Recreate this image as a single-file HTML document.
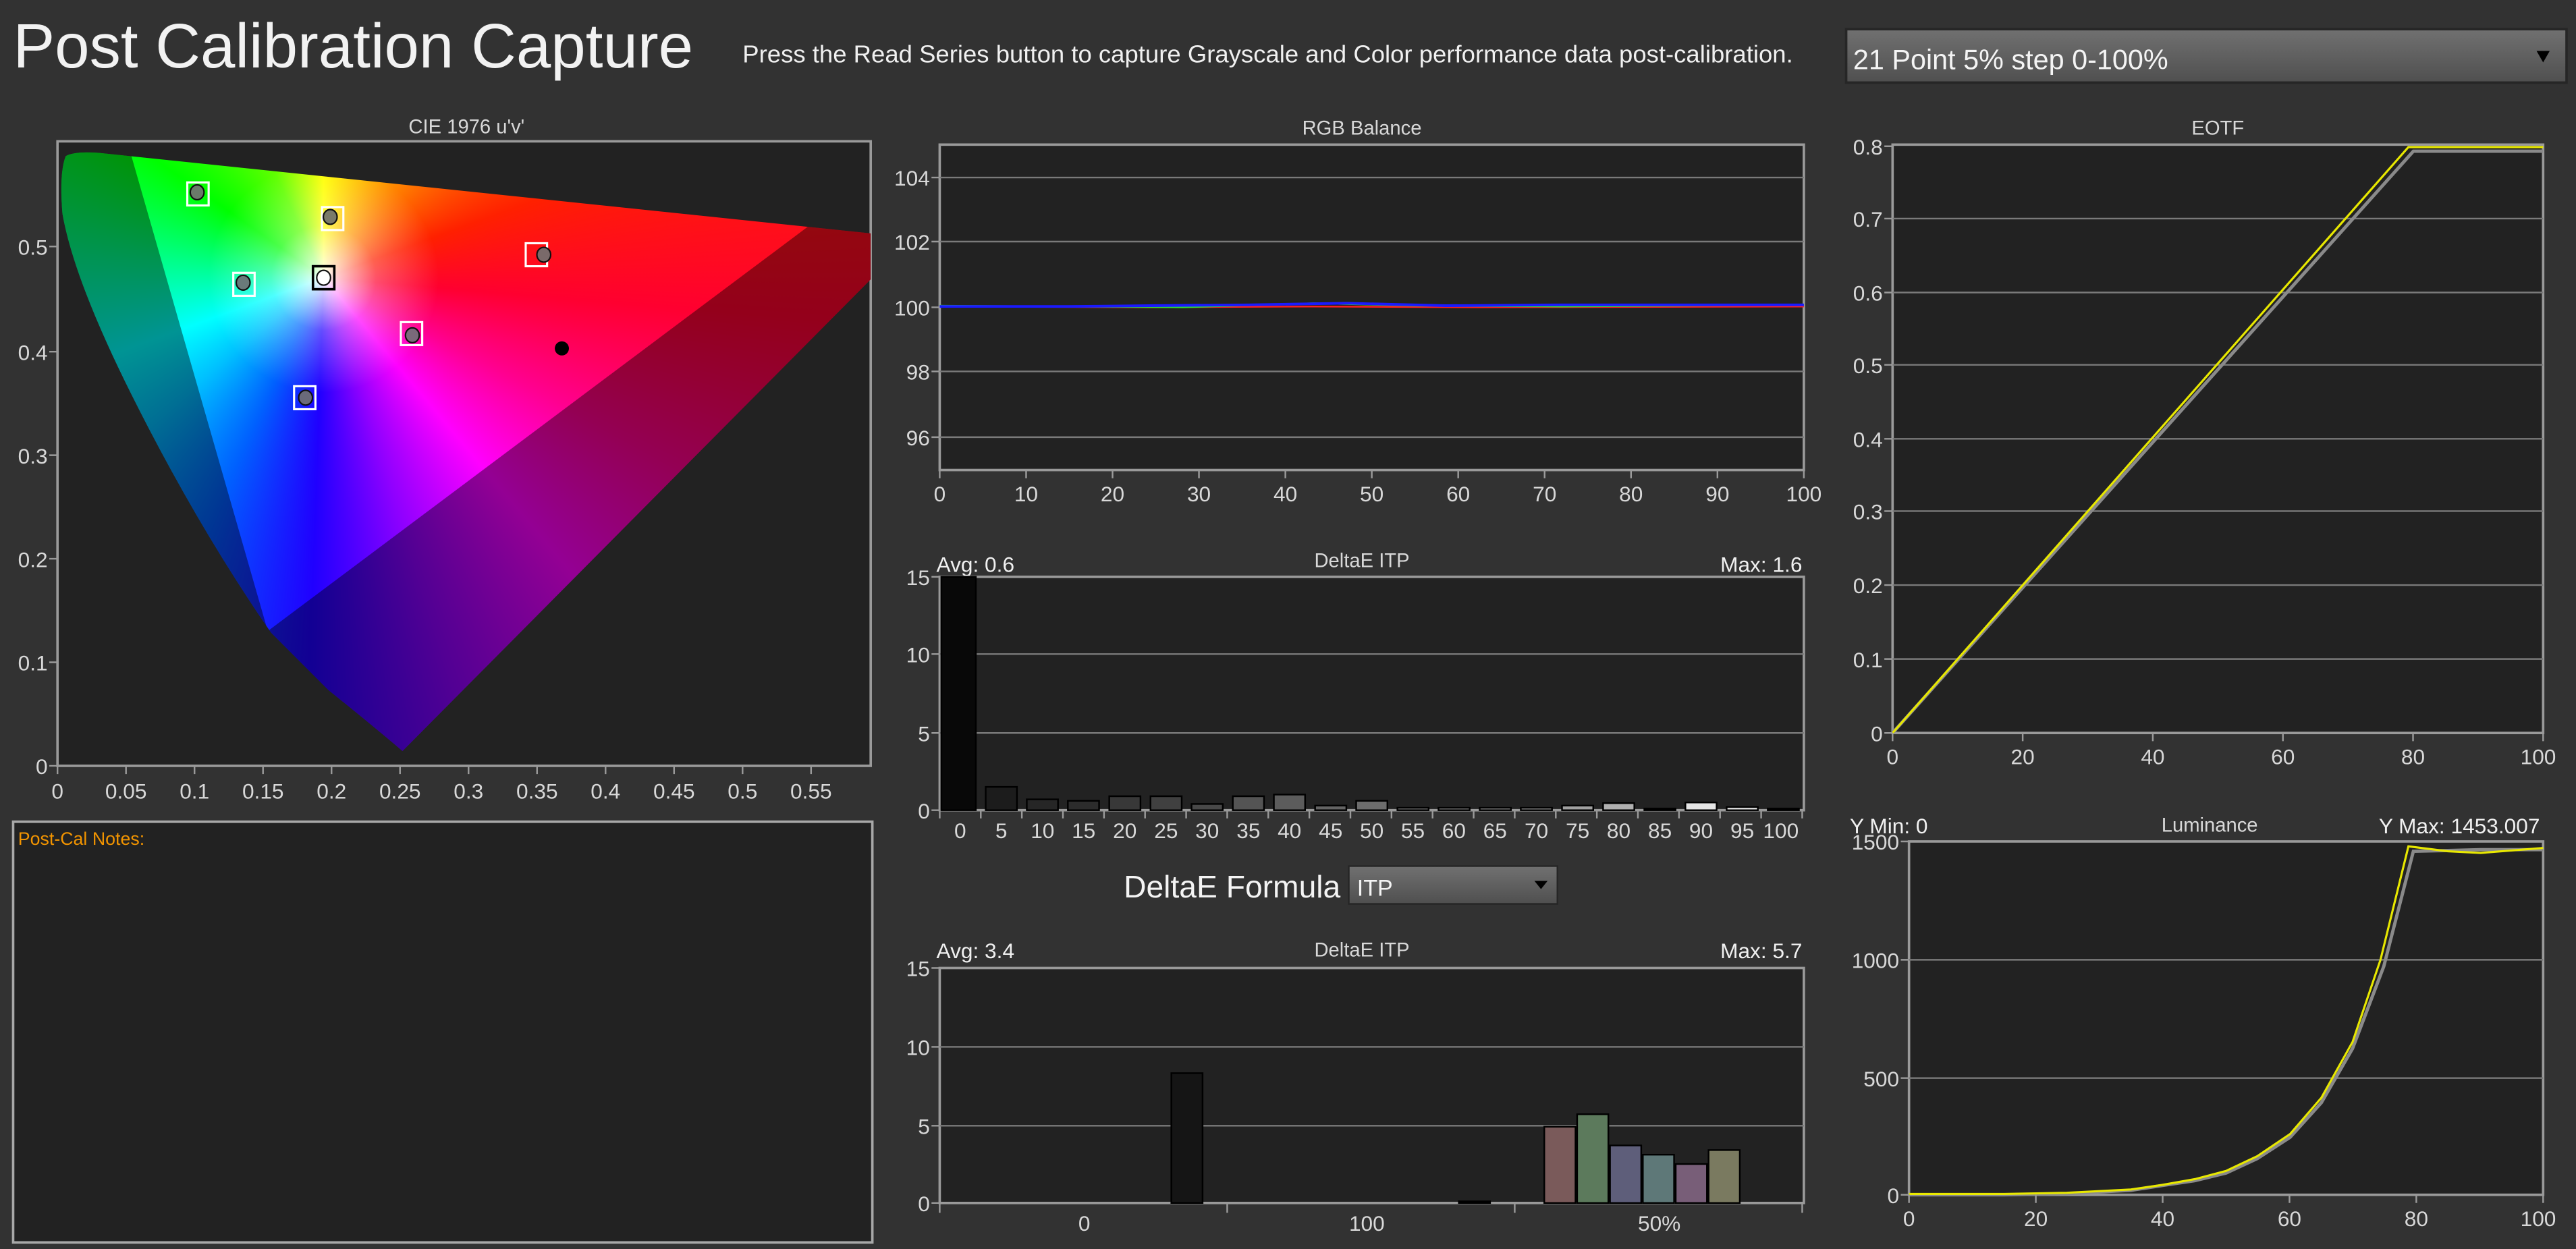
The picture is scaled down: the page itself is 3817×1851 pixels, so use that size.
<!DOCTYPE html>
<html><head><meta charset="utf-8"><style>
html,body{margin:0;padding:0;background:#323232;overflow:hidden}
svg{display:block}
text{font-family:"Liberation Sans Narrow","Liberation Sans",sans-serif;fill:#d8d8d8}
</style></head><body>
<svg width="3817" height="1851" viewBox="0 0 1568 760" preserveAspectRatio="none" xmlns="http://www.w3.org/2000/svg">
<defs>
<linearGradient id="dd" x1="0" y1="0" x2="0" y2="1"><stop offset="0" stop-color="#707070"/><stop offset="1" stop-color="#505050"/></linearGradient>
<clipPath id="loc"><path d="M40,95 Q45,92 60,93 L530,142 L530,170 L245,457 Q225,440 200,420 L165,385 Q120,320 80,240 Q45,170 38,130 Q36,105 40,95 Z"/></clipPath>
<clipPath id="cbox"><rect x="35" y="86" width="495" height="380"/></clipPath>
</defs>
<rect width="1568" height="760" fill="#323232"/>

<text x="8" y="41" font-size="38" style="fill:#f2f2f2">Post Calibration Capture</text>
<text x="452" y="38" font-size="15" style="fill:#f0f0f0">Press the Read Series button to capture Grayscale and Color performance data post-calibration.</text>
<rect x="1123" y="17" width="440" height="34" fill="#262626"/>
<rect x="1124.5" y="18.5" width="437" height="31" fill="url(#dd)"/>
<text x="1128" y="42" font-size="17" style="fill:#f4f4f4">21 Point 5% step 0-100%</text>
<path d="M1544,31 L1552,31 L1548,38 Z" fill="#000"/>

<!-- CIE -->
<text x="284" y="81" font-size="12" text-anchor="middle">CIE 1976 u'v'</text>
<rect x="35" y="86" width="495" height="380" fill="#222" stroke="#9a9a9a" stroke-width="1.5"/>
<g clip-path="url(#cbox)">
<g clip-path="url(#loc)">
<foreignObject x="35" y="86" width="495" height="380">
<div xmlns="http://www.w3.org/1999/xhtml" style="width:495px;height:380px;background:radial-gradient(circle at 162px 83px, #fff 0px, rgba(255,255,255,0.8) 8px, rgba(255,255,255,0.3) 32px, rgba(255,255,255,0) 70px), conic-gradient(from 0deg at 162px 83px, #ffff00 0deg, #ff9000 35deg, #ff2000 70deg, #ff0030 95deg, #ff0090 118deg, #ff00ff 140deg, #9000ff 162deg, #2000ff 182deg, #0060ff 205deg, #00c0ff 230deg, #00ffff 250deg, #00ff90 275deg, #00ff00 305deg, #60ff00 335deg, #ffff00 360deg);"></div>
</foreignObject>
<path fill-rule="evenodd" fill="#000" opacity="0.42" d="M20,60 L600,60 L600,500 L20,500 Z M80,95 L493,137 L163,384 Z"/>
</g>
</g>
<g fill="none" stroke="#fff" stroke-width="1.3">
<rect x="114" y="111" width="13" height="14"/>
<rect x="196" y="126" width="13" height="14"/>
<rect x="142" y="166" width="13" height="14"/>
<rect x="320" y="148" width="13" height="14"/>
<rect x="244" y="196" width="13" height="14"/>
<rect x="179" y="235" width="13" height="14"/>
</g>
<rect x="190.5" y="162" width="13" height="14" fill="none" stroke="#000" stroke-width="1.5"/>
<g stroke="#111" stroke-width="0.9">
<ellipse cx="120" cy="117" rx="4.2" ry="4.5" fill="#6a7a6a"/>
<ellipse cx="201" cy="132" rx="4.2" ry="4.5" fill="#7a7a6a"/>
<ellipse cx="148" cy="172" rx="4.2" ry="4.5" fill="#6a7a7a"/>
<ellipse cx="197" cy="169" rx="4.2" ry="4.5" fill="#fff"/>
<ellipse cx="331" cy="155" rx="4.2" ry="4.5" fill="#7a6a6a"/>
<ellipse cx="251" cy="204" rx="4.2" ry="4.5" fill="#7a6a7a"/>
<ellipse cx="186" cy="242" rx="4.2" ry="4.5" fill="#6a6a7a"/>
</g>
<circle cx="342" cy="212" r="4.3" fill="#000"/>
<g stroke="#9a9a9a" stroke-width="1">
<path d="M35,466v5 M76.7,466v5 M118.4,466v5 M160.1,466v5 M201.8,466v5 M243.5,466v5 M285.2,466v5 M326.9,466v5 M368.6,466v5 M410.3,466v5 M452,466v5 M493.7,466v5"/>
<path d="M30,466h5 M30,403h5 M30,340h5 M30,277h5 M30,214h5 M30,150h5"/>
</g>
<g font-size="13" text-anchor="middle">
<text x="35" y="486">0</text><text x="76.7" y="486">0.05</text><text x="118.4" y="486">0.1</text><text x="160.1" y="486">0.15</text><text x="201.8" y="486">0.2</text><text x="243.5" y="486">0.25</text><text x="285.2" y="486">0.3</text><text x="326.9" y="486">0.35</text><text x="368.6" y="486">0.4</text><text x="410.3" y="486">0.45</text><text x="452" y="486">0.5</text><text x="493.7" y="486">0.55</text>
</g>
<g font-size="13" text-anchor="end">
<text x="29" y="471">0</text><text x="29" y="408">0.1</text><text x="29" y="345">0.2</text><text x="29" y="282">0.3</text><text x="29" y="219">0.4</text><text x="29" y="155">0.5</text>
</g>

<!-- notes -->
<rect x="8" y="500" width="523" height="256" fill="#222" stroke="#a8a8a8" stroke-width="1.5"/>
<text x="11" y="514" font-size="11" style="fill:#f29400">Post-Cal Notes:</text>

<!-- RGB Balance -->
<text x="829" y="82" font-size="12" text-anchor="middle">RGB Balance</text>
<rect x="572" y="88" width="526" height="198" fill="#222" stroke="#9a9a9a" stroke-width="1.5"/>
<g stroke="#7a7a7a" stroke-width="1"><path d="M572,108h526 M572,147h526 M572,226h526 M572,266h526"/></g>
<path d="M572,186.5 L700,187 L800,186.5 L900,187 L1098,186.5" stroke="#ff2020" stroke-width="1" fill="none"/>
<path d="M572,186 L650,186.5 L720,187 L800,184.5 L860,186 L950,186.5 L1098,185.5" stroke="#30e030" stroke-width="1" fill="none"/>
<path d="M572,186.5 L650,186.5 L700,186 L760,185.5 L820,184.5 L880,186 L950,185.5 L1098,185.5" stroke="#1a1aff" stroke-width="1.6" fill="none"/>
<g stroke="#9a9a9a"><path d="M572,286v5 M624.6,286v5 M677.2,286v5 M729.8,286v5 M782.4,286v5 M835,286v5 M887.6,286v5 M940.2,286v5 M992.8,286v5 M1045.4,286v5 M1098,286v5 M567,108h5 M567,147h5 M567,187h5 M567,226h5 M567,266h5"/></g>
<g font-size="13" text-anchor="middle">
<text x="572" y="305">0</text><text x="624.6" y="305">10</text><text x="677.2" y="305">20</text><text x="729.8" y="305">30</text><text x="782.4" y="305">40</text><text x="835" y="305">50</text><text x="887.6" y="305">60</text><text x="940.2" y="305">70</text><text x="992.8" y="305">80</text><text x="1045.4" y="305">90</text><text x="1098" y="305">100</text>
</g>
<g font-size="13" text-anchor="end">
<text x="566" y="113">104</text><text x="566" y="152">102</text><text x="566" y="192">100</text><text x="566" y="231">98</text><text x="566" y="271">96</text>
</g>

<!-- DeltaE 1 -->
<text x="570" y="348" font-size="13" style="fill:#f0f0f0">Avg: 0.6</text>
<text x="829" y="345" font-size="12" text-anchor="middle">DeltaE ITP</text>
<text x="1097" y="348" font-size="13" text-anchor="end" style="fill:#f0f0f0">Max: 1.6</text>
<rect x="572" y="351" width="526" height="142" fill="#222" stroke="#9a9a9a" stroke-width="1.5"/>
<g stroke="#7a7a7a"><path d="M572,398h526 M572,446h526"/></g>
<g stroke="#000" stroke-width="1">
<rect x="573" y="351" width="21" height="142" fill="#080808"/>
<rect x="600" y="478.8" width="19" height="14.2" fill="#1c1c1c"/>
<rect x="625" y="486.4" width="19" height="6.6" fill="#262626"/>
<rect x="650" y="487.3" width="19" height="5.7" fill="#2c2c2c"/>
<rect x="675.2" y="484.5" width="19" height="8.5" fill="#383838"/>
<rect x="700.3" y="484.5" width="19" height="8.5" fill="#404040"/>
<rect x="725.3" y="489.2" width="19" height="3.8" fill="#484848"/>
<rect x="750.4" y="484.5" width="19" height="8.5" fill="#545454"/>
<rect x="775.4" y="483.5" width="19" height="9.5" fill="#5c5c5c"/>
<rect x="800.5" y="490.2" width="19" height="2.8" fill="#646464"/>
<rect x="825.5" y="487.3" width="19" height="5.7" fill="#6c6c6c"/>
<rect x="850.6" y="491.5" width="19" height="1.5" fill="#767676"/>
<rect x="875.6" y="491.5" width="19" height="1.5" fill="#808080"/>
<rect x="900.7" y="491.5" width="19" height="1.5" fill="#8a8a8a"/>
<rect x="925.7" y="491.5" width="19" height="1.5" fill="#949494"/>
<rect x="950.8" y="490.2" width="19" height="2.8" fill="#a0a0a0"/>
<rect x="975.8" y="488.7" width="19" height="4.3" fill="#b0b0b0"/>
<rect x="1000.9" y="492" width="19" height="1" fill="#bbb"/>
<rect x="1025.9" y="488.3" width="19" height="4.7" fill="#e4e4e4"/>
<rect x="1051" y="491.1" width="19" height="1.9" fill="#eee"/>
<rect x="1076" y="492" width="19" height="1" fill="#fff"/>
</g>
<g stroke="#9a9a9a"><path d="M567,351h5 M567,398h5 M567,446h5 M567,493h5 M572,493v5 M597,493v5 M622,493v5 M647,493v5 M672,493v5 M697,493v5 M722,493v5 M747,493v5 M772,493v5 M797,493v5 M822,493v5 M847,493v5 M872,493v5 M897,493v5 M922,493v5 M947,493v5 M972,493v5 M997,493v5 M1022,493v5 M1047,493v5 M1072,493v5 M1097,493v5"/></g>
<g font-size="13" text-anchor="middle">
<text x="584.5" y="510">0</text><text x="609.5" y="510">5</text><text x="634.6" y="510">10</text><text x="659.6" y="510">15</text><text x="684.7" y="510">20</text><text x="709.8" y="510">25</text><text x="734.8" y="510">30</text><text x="759.9" y="510">35</text><text x="784.9" y="510">40</text><text x="810" y="510">45</text><text x="835" y="510">50</text><text x="860" y="510">55</text><text x="885" y="510">60</text><text x="910" y="510">65</text><text x="935.2" y="510">70</text><text x="960.3" y="510">75</text><text x="985.3" y="510">80</text><text x="1010.4" y="510">85</text><text x="1035.4" y="510">90</text><text x="1060.5" y="510">95</text><text x="1084" y="510">100</text>
</g>
<g font-size="13" text-anchor="end">
<text x="566" y="356">15</text><text x="566" y="403">10</text><text x="566" y="451">5</text><text x="566" y="498">0</text>
</g>

<!-- formula -->
<text x="684" y="546" font-size="19" style="fill:#f4f4f4">DeltaE Formula</text>
<rect x="820.5" y="526.5" width="128" height="24" fill="#262626"/>
<rect x="821.5" y="527.5" width="126" height="22" fill="url(#dd)"/>
<text x="826" y="545" font-size="14" style="fill:#f4f4f4">ITP</text>
<path d="M934,536 L942,536 L938,541 Z" fill="#000"/>

<!-- DeltaE 2 -->
<text x="570" y="583" font-size="13" style="fill:#f0f0f0">Avg: 3.4</text>
<text x="829" y="582" font-size="12" text-anchor="middle">DeltaE ITP</text>
<text x="1097" y="583" font-size="13" text-anchor="end" style="fill:#f0f0f0">Max: 5.7</text>
<rect x="572" y="589" width="526" height="143" fill="#222" stroke="#9a9a9a" stroke-width="1.5"/>
<g stroke="#7a7a7a"><path d="M572,637h526 M572,685h526"/></g>
<g stroke="#000" stroke-width="1">
<rect x="713" y="653" width="19" height="79" fill="#151515"/>
<rect x="888" y="731" width="19" height="1" fill="#222"/>
<rect x="940" y="685.6" width="19" height="46.4" fill="#7a5a5a"/>
<rect x="960" y="678" width="19" height="54" fill="#5c7a5c"/>
<rect x="980" y="697" width="19" height="35" fill="#5e5e7a"/>
<rect x="1000" y="702.6" width="19" height="29.4" fill="#5e7878"/>
<rect x="1020" y="708.3" width="19" height="23.7" fill="#785e78"/>
<rect x="1040" y="699.8" width="19" height="32.2" fill="#7a7a60"/>
</g>
<g stroke="#9a9a9a"><path d="M567,589h5 M567,637h5 M567,685h5 M567,732h5 M572,732v6 M747,732v6 M922,732v6 M1097,732v6"/></g>
<g font-size="13" text-anchor="middle"><text x="660" y="749">0</text><text x="832" y="749">100</text><text x="1010" y="749">50%</text></g>
<g font-size="13" text-anchor="end">
<text x="566" y="594">15</text><text x="566" y="642">10</text><text x="566" y="690">5</text><text x="566" y="737">0</text>
</g>

<!-- EOTF -->
<text x="1350" y="82" font-size="12" text-anchor="middle">EOTF</text>
<rect x="1152" y="88" width="396" height="358" fill="#222" stroke="#9a9a9a" stroke-width="1.5"/>
<g stroke="#7a7a7a"><path d="M1152,133h396 M1152,178h396 M1152,222h396 M1152,267h396 M1152,311h396 M1152,356h396 M1152,401h396"/></g>
<path d="M1152,446 L1469,92 L1548,92" stroke="#8a8a8a" stroke-width="2" fill="none"/>
<path d="M1152,446 L1466,89.5 L1548,89.5" stroke="#e8e800" stroke-width="1.3" fill="none"/>
<g stroke="#9a9a9a"><path d="M1147,89h5 M1147,133h5 M1147,178h5 M1147,222h5 M1147,267h5 M1147,311h5 M1147,356h5 M1147,401h5 M1147,446h5 M1152,446v5 M1231.2,446v5 M1310.4,446v5 M1389.6,446v5 M1468.8,446v5 M1548,446v5"/></g>
<g font-size="13" text-anchor="middle">
<text x="1152" y="465">0</text><text x="1231.2" y="465">20</text><text x="1310.4" y="465">40</text><text x="1389.6" y="465">60</text><text x="1468.8" y="465">80</text><text x="1545" y="465">100</text>
</g>
<g font-size="13" text-anchor="end">
<text x="1146" y="94">0.8</text><text x="1146" y="138">0.7</text><text x="1146" y="183">0.6</text><text x="1146" y="227">0.5</text><text x="1146" y="272">0.4</text><text x="1146" y="316">0.3</text><text x="1146" y="361">0.2</text><text x="1146" y="406">0.1</text><text x="1146" y="451">0</text>
</g>

<!-- Luminance -->
<text x="1126" y="507" font-size="13" style="fill:#f0f0f0">Y Min: 0</text>
<text x="1345" y="506" font-size="12" text-anchor="middle">Luminance</text>
<text x="1546" y="507" font-size="13" text-anchor="end" style="fill:#f0f0f0">Y Max: 1453.007</text>
<rect x="1162" y="512" width="386" height="215" fill="#222" stroke="#9a9a9a" stroke-width="1.5"/>
<g stroke="#7a7a7a"><path d="M1162,584h386 M1162,656h386"/></g>
<path d="M1162,727 L1220,727 L1258,726.3 L1297,724.3 L1316,721.4 L1336,718.4 L1355,713.8 L1374,705 L1394,692 L1413,671 L1432,638 L1451,588 L1469,518 L1490,517.5 L1510,517 L1548,517" stroke="#8a8a8a" stroke-width="2" fill="none"/>
<path d="M1162,726.5 L1220,726.5 L1258,725.8 L1297,723.8 L1316,721 L1336,717.5 L1355,712.5 L1374,703.5 L1394,690 L1413,668 L1432,634 L1449,584 L1466,515 L1490,518 L1510,519 L1548,516" stroke="#e8e800" stroke-width="1.3" fill="none"/>
<g stroke="#9a9a9a"><path d="M1157,512h5 M1157,584h5 M1157,656h5 M1157,727h5 M1162,727v5 M1239.2,727v5 M1316.4,727v5 M1393.6,727v5 M1470.8,727v5 M1548,727v5"/></g>
<g font-size="13" text-anchor="middle">
<text x="1162" y="746">0</text><text x="1239.2" y="746">20</text><text x="1316.4" y="746">40</text><text x="1393.6" y="746">60</text><text x="1470.8" y="746">80</text><text x="1545" y="746">100</text>
</g>
<g font-size="13" text-anchor="end">
<text x="1156" y="517">1500</text><text x="1156" y="589">1000</text><text x="1156" y="661">500</text><text x="1156" y="732">0</text>
</g>
</svg>
</body></html>
